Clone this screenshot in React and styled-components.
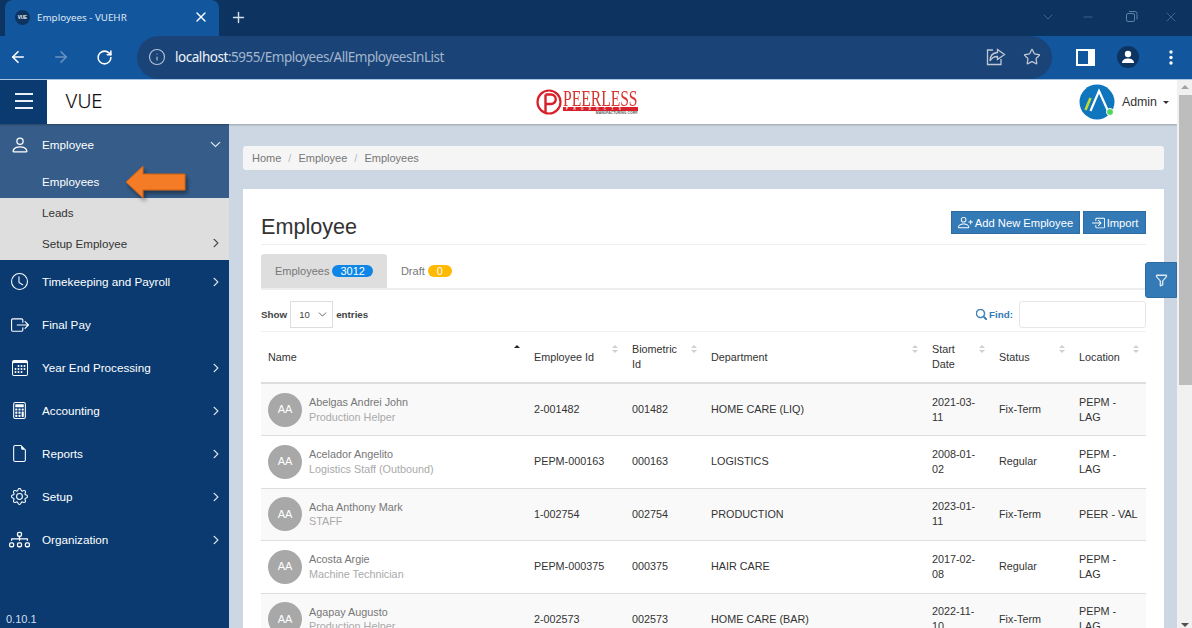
import React from "react";
import styled, { createGlobalStyle } from "styled-components";
import { ArrowLeft, ArrowRight, RotateCw, Info, Star, Plus, X, ChevronDown, Minus } from "lucide-react";
import {
  BsPerson, BsClock, BsBoxArrowRight, BsCalendar3, BsCalculator, BsFileEarmark, BsGear, BsDiagram3,
  BsChevronRight, BsChevronDown, BsPersonPlus, BsBoxArrowInRight, BsFunnel, BsSearch,
} from "react-icons/bs";

const Global = createGlobalStyle`
  html, body { margin: 0; padding: 0; height: 100%; overflow: hidden; }
  body { font-family: "Liberation Sans", Arial, sans-serif; font-size: 11px; color: #333; }
  * { box-sizing: border-box; }
`;

const Window = styled.div`display:flex;flex-direction:column;width:1192px;height:628px;overflow:hidden;background:#fff;`;
const TabStrip = styled.div`display:flex;align-items:stretch;height:36px;background:#0d3461;padding-left:5px;flex:none;`;
const BrowserTab = styled.div`width:214px;background:#12569e;border-radius:8px 8px 0 0;display:flex;align-items:center;padding:0 10px 2px;color:#dfe8f2;font:400 9.8px "Noto Sans",sans-serif;`;
const Favicon = styled.span`width:15px;height:15px;border-radius:50%;background:#0d3461;color:#fff;font:700 4.5px "Liberation Sans",sans-serif;display:flex;align-items:center;justify-content:center;margin:0 7px 0 0;`;
const TabTitle = styled.span`flex:1;`;
const NewTab = styled.div`width:38px;padding-bottom:2px;display:flex;align-items:center;justify-content:center;color:#d6e0ec;`;
const WinControls = styled.div`margin-left:auto;padding:0 13px 3px 0;display:flex;align-items:center;gap:21px;color:#5f7fa5;`;
const Toolbar = styled.div`display:flex;align-items:center;height:44px;padding-bottom:1px;background:#12569e;border-bottom:1px solid #a8c5e6;flex:none;`;
const Slot = styled.div`width:36px;height:36px;margin-right:${p=>p.$mr||7}px;display:flex;align-items:center;justify-content:center;color:${p=>p.$dim?"#6c93c0":"#fff"};flex:none;`;
const Address = styled.div`flex:1;height:43px;margin-left:8px;margin-right:15px;border-radius:22px;background:#1a4478;display:flex;align-items:center;padding:0 11px;color:#b6c2d2;`;
const Url = styled.div`margin-left:9px;font:400 13.5px "Noto Sans",sans-serif;color:#a3b6cd;letter-spacing:-.46px;flex:1;`;
const Host = styled.span`color:#f2f5f9;`;
const AddrIcons = styled.div`display:flex;align-items:center;gap:17px;color:#c0c8d2;`;
const Profile = styled.span`width:22px;height:22px;border-radius:50%;background:#0d3461;display:flex;align-items:center;justify-content:center;`;

const AppArea = styled.div`flex:1;display:flex;min-height:0;`;
const AppColumn = styled.div`flex:1;display:flex;flex-direction:column;min-width:0;overflow:hidden;`;
const Header = styled.header`height:44px;flex:none;display:flex;align-items:center;background:#fff;box-shadow:0 1px 2px rgba(0,0,0,.25);position:relative;z-index:2;`;
const Burger = styled.div`width:47px;height:44px;padding-bottom:3px;background:#0a3a70;display:flex;flex-direction:column;gap:5px;align-items:center;justify-content:center;`;
const BurgerLine = styled.span`width:18px;height:2px;background:#eaf0f6;`;
const Brand = styled.div`margin:0 0 2px 18px;font:300 19px "Inter",sans-serif;color:#111;width:471px;letter-spacing:-.3px;`;
const Logo = styled.div`display:flex;align-items:center;gap:1px;`;
const LogoWords = styled.div`display:flex;flex-direction:column;width:75px;`;
const LogoName = styled.span`height:17px;font:400 24px/17px "Liberation Serif",serif;color:#d8342f;white-space:nowrap;transform:scaleX(.65);transform-origin:left;`;
const LogoBar = styled.span`height:4px;background:#d8202a;color:#fff;font:700 3px/4px "Liberation Sans",sans-serif;letter-spacing:5.4px;padding-left:3px;white-space:nowrap;overflow:hidden;`;
const LogoSub = styled.span`height:4px;font:700 3.4px/4px "Liberation Sans",sans-serif;color:#555;text-align:right;letter-spacing:.05px;white-space:nowrap;`;
const UserBox = styled.div`margin-left:auto;display:flex;align-items:center;padding-right:8px;font:400 12.4px "Liberation Sans",sans-serif;color:#333;`;
const AvatarWrap = styled.div`position:relative;width:36px;height:36px;margin-right:7px;`;
const OnlineDot = styled.span`position:absolute;right:1px;bottom:4px;width:8px;height:8px;border-radius:50%;background:#4fd45c;border:1px solid #fff;`;
const Caret = styled.span`margin-left:6px;border:3px solid transparent;border-top-color:#333;border-bottom:0;`;

const Body = styled.div`flex:1;display:flex;min-height:0;background:#cdd7e3;`;
const Sidebar = styled.nav`width:229px;flex:none;background:#0a3a70;display:flex;flex-direction:column;position:relative;color:#fff;font-size:11.7px;`;
const ActiveGroup = styled.div`background:#365d8a;`;
const MenuHead = styled.div`height:${p=>p.$h||43}px;display:flex;align-items:center;padding:0 8px 0 9px;`;
const MenuIcon = styled.span`width:21px;margin-right:12px;display:flex;justify-content:center;font-size:${p=>p.$size||17}px;`;
const MenuLabel = styled.span`flex:1;`;
const SubItem = styled.div`height:${p=>p.$h}px;display:flex;align-items:center;padding:0 8px 0 42px;font-size:11.6px;color:${p=>p.$dark?"#333":"#fff"};`;
const SubGroup = styled.div`background:#dedede;padding-bottom:1px;`;
const Version = styled.div`margin-top:auto;padding:0 0 3px 6px;font-size:11px;color:#d5deea;`;
const OrangeArrow = styled.svg`position:absolute;left:124px;top:40px;overflow:visible;`;

const Main = styled.main`flex:1;min-width:0;padding:22px 13px 0 14px;overflow:hidden;position:relative;`;
const Crumbs = styled.div`height:24px;background:#f5f5f5;border-radius:3px;display:flex;align-items:center;padding-left:9px;font-size:11px;color:#777;margin-bottom:19px;`;
const Sep = styled.span`color:#bbb;margin:0 7px;`;
const Card = styled.section`background:#fff;padding:0 18px;height:600px;`;
const TitleRow = styled.div`height:56px;display:flex;align-items:flex-end;justify-content:space-between;padding-bottom:4px;border-bottom:1px solid #eee;`;
const Title = styled.h1`margin:0;font-weight:400;font-size:21.6px;line-height:26px;color:#333;`;
const Actions = styled.div`display:flex;gap:3px;align-self:flex-end;margin-bottom:6px;`;
const Btn = styled.button`height:23px;border:1px solid #2e6da4;background:#337ab7;color:#fff;font:400 11.2px "Liberation Sans",sans-serif;padding:0;white-space:nowrap;display:flex;align-items:center;gap:2px;width:${p=>p.$w}px;justify-content:center;`;
const TabsBar = styled.div`margin-top:9px;height:36px;display:flex;border-bottom:2px solid #eee;`;
const TabItem = styled.div`height:34px;display:flex;align-items:center;gap:3px;padding:0 14px;font-size:11px;color:#777;background:${p=>p.$active?"#dedede":"transparent"};border-radius:3px 3px 0 0;`;
const Pill = styled.span`height:12px;border-radius:7px;background:${p=>p.$c};color:#fff;font-size:11px;line-height:12px;padding:0 ${p=>p.$p}px;`;
const Controls = styled.div`height:42px;padding:0 0 3px;display:flex;align-items:flex-end;justify-content:space-between;border-bottom:1px solid #f1f1f1;`;
const Show = styled.div`display:flex;align-items:center;gap:3px;font-size:9.8px;font-weight:700;color:#444;`;
const SelectBox = styled.div`width:43px;height:27px;border:1px solid #ddd;display:flex;align-items:center;justify-content:space-between;padding:0 3px 0 8px;font-size:9.5px;font-weight:400;color:#444;`;
const FindBox = styled.div`display:flex;align-items:center;color:#337ab7;font-size:9.8px;font-weight:700;gap:2px;`;
const FindInput = styled.div`width:127px;height:27px;border:1px solid #e6e6e6;border-radius:3px;margin-left:4px;`;
const Table = styled.table`width:885px;table-layout:fixed;border-collapse:collapse;font-size:10.8px;color:#333;`;
const Th = styled.th`position:relative;font-weight:400;text-align:left;padding:10px 24px 10px 7px;height:50px;line-height:15px;border-bottom:2px solid #ddd;vertical-align:middle;`;
const SortMark = styled.span`position:absolute;right:7px;top:13px;display:flex;flex-direction:column;gap:2px;`;
const Tri = styled.span`border:3.5px solid transparent;${p=>p.$up?`border-bottom-color:${p.$on?"#222":"#d0d0d0"};border-top:0;`:`border-top-color:${p.$on===false?"#d0d0d0":"transparent"};border-bottom:0;`}`;
const Tr = styled.tr`background:${p=>p.$odd?"#f9f9f9":"#fff"};height:52.5px;`;
const Td = styled.td`padding:0 7px;line-height:15px;border-bottom:1px solid #ddd;vertical-align:middle;`;
const Person = styled.div`display:flex;align-items:center;gap:7px;`;
const Initials = styled.span`width:34px;height:34px;border-radius:50%;background:#a8a8a8;color:#fff;font-size:11px;display:flex;align-items:center;justify-content:center;flex:none;`;
const PersonText = styled.div`display:flex;flex-direction:column;line-height:14.5px;`;
const PersonName = styled.span`color:#777;`;
const PersonRole = styled.span`color:#aaa;`;
const FilterTab = styled.div`position:absolute;right:0;top:138px;width:32px;height:36px;background:#337ab7;border:1px solid #2e6da4;border-radius:3px 0 0 3px;display:flex;align-items:center;justify-content:center;color:#fff;font-size:13px;`;

const Scrollbar = styled.div`width:15px;flex:none;background:#f1f1f1;display:flex;flex-direction:column;align-items:center;`;
const ScrollUp = styled.span`margin-top:5px;border:4px solid transparent;border-bottom-color:#a3a3a3;border-top:0;`;
const Thumb = styled.div`width:13px;height:290px;margin:6px 0 0 1px;background:#bdbdbd;`;
const ScrollDown = styled.span`margin-top:auto;margin-bottom:1px;border:4px solid transparent;border-top-color:#505050;border-bottom:0;`;

const menu = [
  [BsClock, "Timekeeping and Payroll", true, 17],
  [BsBoxArrowRight, "Final Pay", false, 18],
  [BsCalendar3, "Year End Processing", true, 16],
  [BsCalculator, "Accounting", true, 17],
  [BsFileEarmark, "Reports", true, 17],
  [BsGear, "Setup", true, 17],
  [BsDiagram3, "Organization", true, 21],
];
const cols = [266, 98, 79, 221, 67, 80, 74];
const heads = ["Name", "Employee Id", "Biometric Id", "Department", "Start Date", "Status", "Location"];
const rows = [
  ["Abelgas Andrei John", "Production Helper", "2-001482", "001482", "HOME CARE (LIQ)", "2021-03-11", "Fix-Term", "PEPM - LAG"],
  ["Acelador Angelito", "Logistics Staff (Outbound)", "PEPM-000163", "000163", "LOGISTICS", "2008-01-02", "Regular", "PEPM - LAG"],
  ["Acha Anthony Mark", "STAFF", "1-002754", "002754", "PRODUCTION", "2023-01-11", "Fix-Term", "PEER - VAL"],
  ["Acosta Argie", "Machine Technician", "PEPM-000375", "000375", "HAIR CARE", "2017-02-08", "Regular", "PEPM - LAG"],
  ["Agapay Augusto", "Production Helper", "2-002573", "002573", "HOME CARE (BAR)", "2022-11-10", "Fix-Term", "PEPM - LAG"],
];

export default function App() {
  return (
    <Window>
      <Global />
      <TabStrip>
        <BrowserTab>
          <Favicon>VUE</Favicon>
          <TabTitle>Employees - VUEHR</TabTitle>
          <X size={16} color="#fff" />
        </BrowserTab>
        <NewTab><Plus size={17} strokeWidth={2} /></NewTab>
        <WinControls>
          <ChevronDown size={16} strokeWidth={1} style={{ marginRight: 4 }} />
          <Minus size={14} strokeWidth={1} style={{ marginRight: 6 }} />
          <svg width="20" height="14" viewBox="0 0 20 14" fill="none" stroke="currentColor"><rect x="4.5" y="3.5" width="8" height="8" rx="1.5" /><path d="M7 1.5h6a2 2 0 0 1 2 2v6" /></svg>
          <X size={16} strokeWidth={1} />
        </WinControls>
      </TabStrip>
      <Toolbar>
        <Slot><ArrowLeft size={18} strokeWidth={2.2} /></Slot>
        <Slot $dim><ArrowRight size={18} strokeWidth={2} /></Slot>
        <Slot $mr={7}><RotateCw size={17} strokeWidth={2.2} /></Slot>
        <Address>
          <Info size={18} strokeWidth={1.5} />
          <Url><Host>localhost</Host>:5955/Employees/AllEmployeesInList</Url>
          <AddrIcons>
            <svg width="20" height="18" viewBox="0 0 20 18" fill="none" stroke="currentColor" strokeWidth="1.3"><path d="M7 2H1.5v14.5h13.5V11" /><path d="M11.5 1.5 18.5 6.5 11.5 11.5V8.5C8 8.5 5.500 10 4 13 4 8 7 4.8 11.5 4.5Z" /></svg>
            <Star size={18} strokeWidth={1.7} />
          </AddrIcons>
        </Address>
        <Slot><svg width="19" height="17" viewBox="0 0 19 17"><path fill="#fff" d="M0 0h19v17H0z" /><path fill="#12569e" d="M2 2h10v13H2z" /></svg></Slot>
        <Slot><Profile><svg width="14" height="14" viewBox="0 0 14 14" fill="#fff"><circle cx="7" cy="4" r="3.2" /><path d="M1 13c0-3 3-4.400 6-4.400s6 1.400 6 4.400z" /></svg></Profile></Slot>
        <Slot $mr={3}><svg width="4" height="15" viewBox="0 0 4 15" fill="#fff"><circle cx="2" cy="2" r="1.7" /><circle cx="2" cy="7.5" r="1.7" /><circle cx="2" cy="13" r="1.7" /></svg></Slot>
      </Toolbar>
      <AppArea>
        <AppColumn>
          <Header>
            <Burger><BurgerLine /><BurgerLine /><BurgerLine /></Burger>
            <Brand>VUE</Brand>
            <Logo>
              <svg width="26" height="26" viewBox="0 0 26 26" fill="none" stroke="#d8202a"><circle cx="13" cy="13" r="11.5" strokeWidth="2.2" /><path d="M9.500 24V5.500M9.500 5.500h5.500a4.500 4.500 0 0 1 0 9.500H9.500" strokeWidth="2.400" /></svg>
              <LogoWords>
                <LogoName>PEERLESS</LogoName>
                <LogoBar>PRODUCTS</LogoBar>
                <LogoSub>MANUFACTURING CORP.</LogoSub>
              </LogoWords>
            </Logo>
            <UserBox>
              <AvatarWrap>
                <svg width="36" height="36" viewBox="0 0 36 36"><circle cx="18" cy="18" r="17.500" fill="#0f75bd" /><path d="M6.500 26 11.500 14" stroke="#c5d82e" strokeWidth="2.600" fill="none" /><path d="M11.500 27 20 7 29 27" stroke="#fff" strokeWidth="2.200" fill="none" /></svg>
                <OnlineDot />
              </AvatarWrap>
              Admin<Caret />
            </UserBox>
          </Header>
          <Body>
            <Sidebar>
              <ActiveGroup>
                <MenuHead $h={41}>
                  <MenuIcon $size={20}><BsPerson /></MenuIcon>
                  <MenuLabel>Employee</MenuLabel>
                  <BsChevronDown size={11} strokeWidth={0.6} />
                </MenuHead>
                <SubItem $h={33}>Employees</SubItem>
              </ActiveGroup>
              <SubGroup>
                <SubItem $h={29} $dark>Leads</SubItem>
                <SubItem $h={32} $dark>
                  <MenuLabel>Setup Employee</MenuLabel>
                  <BsChevronRight size={10} strokeWidth={0.8} />
                </SubItem>
              </SubGroup>
              {menu.map(([Icon, label, more, size]) => (
                <MenuHead key={label}>
                  <MenuIcon $size={size}><Icon /></MenuIcon>
                  <MenuLabel>{label}</MenuLabel>
                  {more && <BsChevronRight size={10} strokeWidth={0.8} />}
                </MenuHead>
              ))}
              <Version>0.10.1</Version>
              <OrangeArrow width="62" height="36" viewBox="0 0 62 36">
                <defs>
                  <filter id="arrowShadow" x="-20%" y="-30%" width="150%" height="170%"><feDropShadow dx="2" dy="3" stdDeviation="2" floodColor="#000" floodOpacity=".45" /></filter>
                </defs>
                <path d="M2 18 19 2V10H61V26H19V34Z" fill="#f47c25" stroke="#c8601a" strokeWidth="1" filter="url(#arrowShadow)" />
              </OrangeArrow>
            </Sidebar>
            <Main>
              <Crumbs>Home<Sep>/</Sep>Employee<Sep>/</Sep>Employees</Crumbs>
              <Card>
                <TitleRow>
                  <Title>Employee</Title>
                  <Actions>
                    <Btn $w={129}><BsPersonPlus size={15} />Add New Employee</Btn>
                    <Btn $w={63}><BsBoxArrowInRight size={14} />Import</Btn>
                  </Actions>
                </TitleRow>
                <TabsBar>
                  <TabItem $active>Employees <Pill $c="#0d86e8" $p={8}>3012</Pill></TabItem>
                  <TabItem>Draft <Pill $c="#ffb900" $p={9}>0</Pill></TabItem>
                </TabsBar>
                <Controls>
                  <Show>Show <SelectBox>10<ChevronDown size={13} strokeWidth={1.5} /></SelectBox> entries</Show>
                  <FindBox><BsSearch size={11} strokeWidth={1} /> Find:<FindInput /></FindBox>
                </Controls>
                <Table>
                  <colgroup>{cols.map((w, i) => <col key={i} width={w} />)}</colgroup>
                  <thead>
                    <tr>
                      {heads.map((h, i) => (
                        <Th key={h}>
                          {h}
                          <SortMark>
                            <Tri $up $on={i === 0} />
                            <Tri $on={i === 0 ? undefined : false} />
                          </SortMark>
                        </Th>
                      ))}
                    </tr>
                  </thead>
                  <tbody>
                    {rows.map((r, i) => (
                      <Tr key={r[0]} $odd={i % 2 === 0}>
                        <Td>
                          <Person>
                            <Initials>AA</Initials>
                            <PersonText>
                              <PersonName>{r[0]}</PersonName>
                              <PersonRole>{r[1]}</PersonRole>
                            </PersonText>
                          </Person>
                        </Td>
                        {r.slice(2).map((c, j) => <Td key={j}>{c}</Td>)}
                      </Tr>
                    ))}
                  </tbody>
                </Table>
              </Card>
              <FilterTab><BsFunnel strokeWidth={0.4} /></FilterTab>
            </Main>
          </Body>
        </AppColumn>
        <Scrollbar>
          <ScrollUp />
          <Thumb />
          <ScrollDown />
        </Scrollbar>
      </AppArea>
    </Window>
  );
}
